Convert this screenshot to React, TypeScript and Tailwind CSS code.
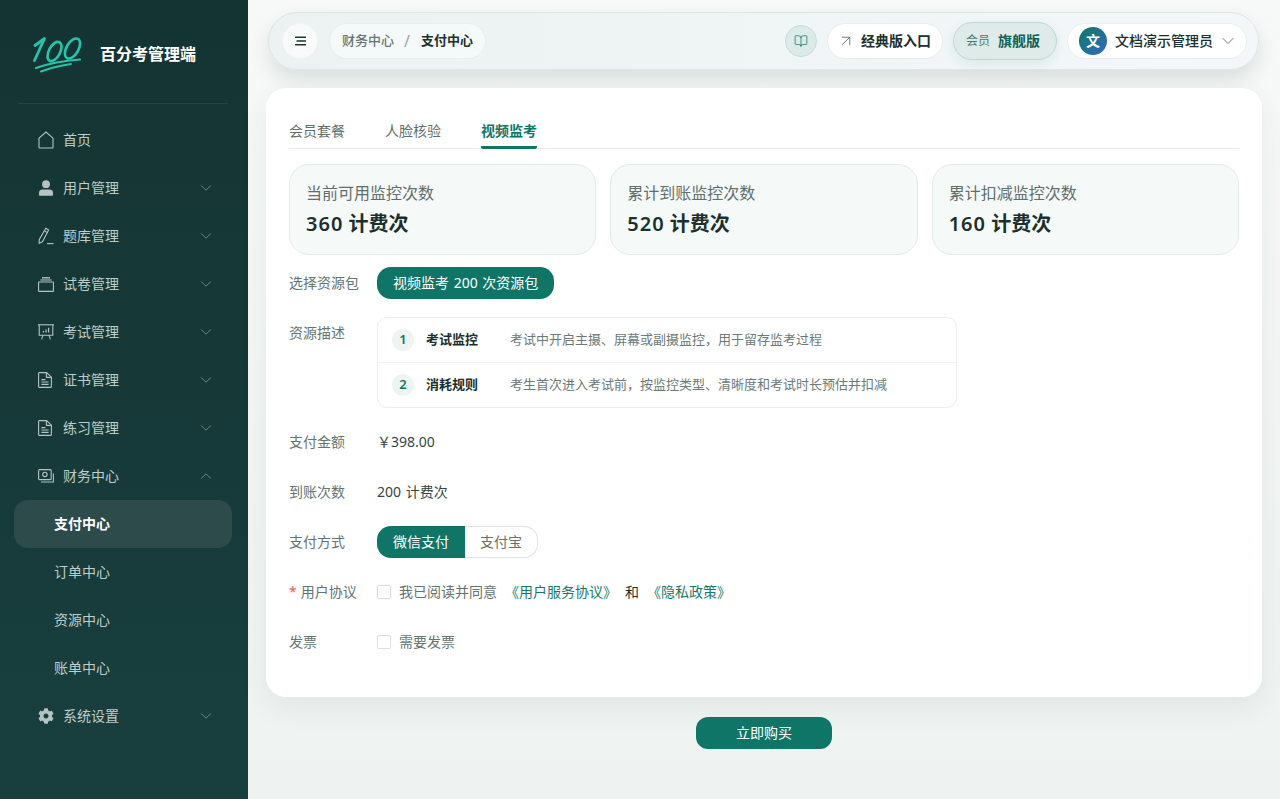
import { ArrowUpRight, BookOpen, ChevronDown, ChevronUp } from "lucide-react";
import { FaCog } from "react-icons/fa";
import type { ReactNode } from "react";

const HomeIcon = () => (
  <svg width="16" height="18" viewBox="0 0 16 18" fill="none" stroke="currentColor" strokeWidth="1.1">
    <path d="M1 7.2 8 1l7 6.2V16.4a.6.6 0 0 1-.6.6H1.6a.6.6 0 0 1-.6-.6Z" />
  </svg>
);

const UserIcon = () => (
  <svg width="16" height="16" viewBox="0 0 16 16" fill="currentColor">
    <circle cx="8" cy="4.2" r="3.9" />
    <path d="M1 12.6c0-2 1.6-3 3.4-3h7.2c1.8 0 3.4 1 3.4 3V15a.7.7 0 0 1-.7.7H1.7A.7.7 0 0 1 1 15Z" />
  </svg>
);

const PenIcon = () => (
  <svg width="16" height="18" viewBox="0 0 16 18" fill="none" stroke="currentColor" strokeWidth="1.1">
    <path d="M7.8 1.2 10.6 3 4.6 14.6 1.2 16.4 1.2 12.6Z" />
    <path d="M6.4 3.8 9.2 5.6" />
    <path d="M9 16.6h6.5" />
  </svg>
);

const PaperIcon = () => (
  <svg width="16" height="15" viewBox="0 0 16 15" fill="none" stroke="currentColor" strokeWidth="1.1">
    <rect x="0.6" y="5" width="14.8" height="9.4" rx="0.5" />
    <path d="M2.4 3h11.2" />
    <path d="M4 0.8h8" strokeWidth="1.4" />
  </svg>
);

const BoardIcon = () => (
  <svg width="16" height="16" viewBox="0 0 16 16" fill="none" stroke="currentColor" strokeWidth="1.1">
    <path d="M0 0.8h16" />
    <path d="M1.2 0.8v10.4h13.6V0.8" />
    <path d="M5 11.2 3.6 15.4M11 11.2l1.4 4.2" />
    <path d="M5.4 8.4V7M8 8.4V5.4M10.6 8.4V3.8" strokeWidth="1.3" />
  </svg>
);

const DocIcon = () => (
  <svg width="14" height="16" viewBox="0 0 14 16" fill="none" stroke="currentColor" strokeWidth="1.1">
    <path d="M0.6 1.2a.6.6 0 0 1 .6-.6h7.4l4.8 4.6v9.6a.6.6 0 0 1-.6.6H1.2a.6.6 0 0 1-.6-.6Z" />
    <path d="M8.4 0.8v4.6h4.8" />
    <path d="M3.4 7.6h4M3.4 10h7.2M3.4 12.4h7.2" />
  </svg>
);

const MoneyIcon = () => (
  <svg width="16" height="15" viewBox="0 0 16 15" fill="none" stroke="currentColor" strokeWidth="1.1">
    <rect x="0.6" y="0.6" width="12.6" height="10" rx="1" />
    <circle cx="6.9" cy="5.4" r="2.2" />
    <path d="M3 13h12.4V4.6" />
  </svg>
);

const MenuIcon = () => (
  <svg width="11" height="10" viewBox="0 0 11 10" fill="#1c3531">
    <rect x="0" y="0.5" width="11" height="1.6" rx="0.4" />
    <rect x="1.5" y="4.2" width="9.5" height="1.6" rx="0.4" />
    <rect x="0" y="7.9" width="11" height="1.6" rx="0.4" />
  </svg>
);

const Logo = () => (
  <svg width="50" height="38" viewBox="0 0 50 38" fill="none" stroke="#27c4a9" strokeLinecap="round" strokeLinejoin="round">
    <path d="M2 10.5 11.5 3.5 1.5 25.5" strokeWidth="2.8" />
    <ellipse cx="21.5" cy="16.5" rx="5.6" ry="10.5" transform="rotate(28 21.5 16.5)" strokeWidth="2.6" />
    <ellipse cx="39.5" cy="13.5" rx="6" ry="11" transform="rotate(30 39.5 13.5)" strokeWidth="2.6" />
    <path d="M3 33C17 28 32 25.5 47 24.5" strokeWidth="2.2" />
    <path d="M8 36.5C18 32.5 28 30.5 38 29" strokeWidth="2" />
  </svg>
);

const menuTop: { label: string; icon: ReactNode; arrow?: boolean }[] = [
  { label: "首页", icon: <HomeIcon /> },
  { label: "用户管理", icon: <UserIcon />, arrow: true },
  { label: "题库管理", icon: <PenIcon />, arrow: true },
  { label: "试卷管理", icon: <PaperIcon />, arrow: true },
  { label: "考试管理", icon: <BoardIcon />, arrow: true },
  { label: "证书管理", icon: <DocIcon />, arrow: true },
  { label: "练习管理", icon: <DocIcon />, arrow: true },
];

const subMenu = ["支付中心", "订单中心", "资源中心", "账单中心"];

const stats = [
  { label: "当前可用监控次数", num: "360" },
  { label: "累计到账监控次数", num: "520" },
  { label: "累计扣减监控次数", num: "160" },
];

const MenuRow = ({ label, icon, arrow, open }: { label: string; icon: ReactNode; arrow?: boolean; open?: boolean }) => (
  <div className="h-12 flex items-center pl-[38px] pr-[33px] text-[#bfcdca] text-sm">
    <span className="w-[25px] flex items-center text-[#b4c4c1]">{icon}</span>
    <span className="flex-1">{label}</span>
    {open ? (
      <ChevronUp size={18} strokeWidth={0.8} className="text-[#a9bbb8]" />
    ) : arrow ? (
      <ChevronDown size={18} strokeWidth={0.8} className="text-[#a9bbb8]" />
    ) : null}
  </div>
);

const Sidebar = () => (
  <aside className="w-[248px] shrink-0 h-full bg-gradient-to-b from-[#143433] to-[#183f3e] flex flex-col">
    <div className="h-[104px] ml-[18px] mr-5 border-b border-[#234543] flex items-center pl-[15px] pt-[4px]">
      <Logo />
      <span className="ml-[17px] text-white text-base font-bold">百分考管理端</span>
    </div>
    <nav className="mt-3">
      {menuTop.map((m) => (
        <MenuRow key={m.label} label={m.label} icon={m.icon} arrow={m.arrow} />
      ))}
      <MenuRow label="财务中心" icon={<MoneyIcon />} open />
      {subMenu.map((s, i) => (
        <div
          key={s}
          className={
            i === 0
              ? "h-12 ml-[14px] mr-4 pl-10 flex items-center rounded-[14px] bg-[#2c4b4a] text-white text-sm font-semibold"
              : "h-12 ml-[14px] mr-4 pl-10 flex items-center text-[#bfcdca] text-sm"
          }
        >
          {s}
        </div>
      ))}
      <MenuRow label="系统设置" icon={<FaCog size={16} />} arrow />
    </nav>
  </aside>
);

const Header = () => (
  <header className="mt-3 ml-5 mr-[21px] h-[58px] shrink-0 rounded-[29px] border border-[#dce6e4] bg-gradient-to-r from-[#ebf2f1] to-[#f4f7fa] shadow-[0_10px_20px_rgba(30,60,55,0.13)] flex items-center pl-[13px] pr-[11px]">
    <button className="w-9 h-9 rounded-full bg-[#f8fbfa] border border-[#f0f5f4] flex items-center justify-center">
      <MenuIcon />
    </button>
    <div className="ml-[11px] h-9 px-3 rounded-full bg-[#f5f9f9] border border-[#e6efed] flex items-center text-[13px]">
      <span className="text-[#667773] font-medium">财务中心</span>
      <span className="mx-[10px] w-[7px] text-base text-[#98a5a2]">/</span>
      <span className="text-[#1b302c] font-semibold">支付中心</span>
    </div>
    <div className="flex-1" />
    <button className="w-8 h-8 rounded-full bg-[#dcebe8] border border-[#c5dcd7] flex items-center justify-center text-[#1f7f70]">
      <BookOpen size={14} strokeWidth={1.4} />
    </button>
    <button className="ml-[10px] w-[116px] h-9 rounded-full bg-white border border-[#e6eeec] flex items-center pl-[9px] text-sm font-semibold text-[#1b302c]">
      <ArrowUpRight size={18} strokeWidth={1} className="text-[#44544f]" />
      <span className="ml-[6px]">经典版入口</span>
    </button>
    <div className="ml-[10px] w-[104px] h-[38px] rounded-full bg-[#dfebe9] border border-[#bcd8d2] shadow-[0_4px_12px_rgba(15,118,103,0.1)] flex items-center pl-3">
      <span className="text-xs text-[#3f7d71]">会员</span>
      <span className="ml-2 text-sm font-semibold text-[#125f53]">旗舰版</span>
    </div>
    <div className="ml-[10px] w-[180px] h-9 rounded-full bg-white border border-[#e9efee] flex items-center pl-[11px]">
      <span className="w-7 h-7 rounded-full bg-gradient-to-br from-[#0f7667] to-[#3368c0] text-white text-sm font-bold flex items-center justify-center">
        文
      </span>
      <span className="ml-2 text-sm font-medium text-[#1b302c] whitespace-nowrap">文档演示管理员</span>
      <ChevronDown size={20} strokeWidth={1} className="ml-[5px] text-[#51625e]" />
    </div>
  </header>
);

const FormRow = ({ label, children, required, top }: { label: string; children: ReactNode; required?: boolean; top?: boolean }) => (
  <div className={top ? "mt-[18px] flex items-start" : "mt-[18px] flex items-center min-h-8"}>
    <div className="w-[88px] shrink-0 h-8 flex items-center text-sm text-[#64746f]">
      {required && <span className="text-[#e35d5d] mr-1">*</span>}
      {label}
    </div>
    {children}
  </div>
);

const Check = () => <span className="w-[14px] h-[14px] rounded-[2px] border border-[#dcdfe6] bg-white shrink-0" />;

const descRows = [
  { no: "1", title: "考试监控", text: "考试中开启主摄、屏幕或副摄监控，用于留存监考过程" },
  { no: "2", title: "消耗规则", text: "考生首次进入考试前，按监控类型、清晰度和考试时长预估并扣减" },
];

const App = () => {
  return (
    <div className="h-screen w-full overflow-hidden flex bg-gradient-to-b from-[#f7f9f8] to-[#eef3f1] font-['Noto_Sans','Noto_Sans_CJK_SC',sans-serif]">
      <Sidebar />
      <main className="flex-1 min-w-0 flex flex-col">
        <Header />
        <section className="mt-[18px] ml-[18px] mr-[18px] h-[609px] shrink-0 rounded-[20px] bg-white shadow-[0_10px_30px_rgba(30,60,55,0.07)] px-[23px] pt-[25px]">
          <div className="h-9 border-b border-[#e9eeec] flex gap-10 text-sm">
            <span className="h-9 pt-2 text-[#5f6f6b]">会员套餐</span>
            <span className="h-9 pt-2 text-[#5f6f6b]">人脸核验</span>
            <span className="h-9 pt-2 text-[#0f7667] font-semibold border-b-[3px] border-[#0f7667] rounded-b-[2px]">视频监考</span>
          </div>

          <div className="mt-[15px] grid grid-cols-3 gap-[14px]">
            {stats.map((s) => (
              <div key={s.label} className="h-[91px] rounded-[20px] border border-[#e3ebe8] bg-[#f5f9f8] pl-4 pt-4">
                <p className="text-base leading-6 text-[#5f6f6b]">{s.label}</p>
                <p className="mt-[5px] text-xl leading-7 font-semibold text-[#1b302c]">
                  <span className="tracking-[1px]">{s.num}</span> 计费次
                </p>
              </div>
            ))}
          </div>

          <div className="mt-[12px] flex items-center">
            <div className="w-[88px] shrink-0 text-sm text-[#64746f]">选择资源包</div>
            <button className="h-8 px-4 rounded-[14px] bg-[#0f7667] text-white text-sm [word-spacing:1px]">视频监考 200 次资源包</button>
          </div>

          <FormRow label="资源描述" top>
            <div className="w-[580px] h-[91px] rounded-[10px] border border-[#ebefee] bg-white">
              {descRows.map((r, i) => (
                <div key={r.no} className={i === 0 ? "h-[45px] flex items-center pl-[14px] border-b border-[#f0f3f2]" : "h-[44px] flex items-center pl-[14px]"}>
                  <span className="w-[22px] h-[22px] rounded-full bg-[#edf4f2] text-[#0f7667] text-[13px] font-semibold flex items-center justify-center">{r.no}</span>
                  <span className="ml-3 w-[84px] text-[13px] font-semibold text-[#1b302c]">{r.title}</span>
                  <span className="text-[13px] text-[#6b7a76]">{r.text}</span>
                </div>
              ))}
            </div>
          </FormRow>

          <FormRow label="支付金额">
            <span className="text-sm text-[#33463f]">￥398.00</span>
          </FormRow>

          <FormRow label="到账次数">
            <span className="text-sm text-[#33463f] [word-spacing:1px]">200 计费次</span>
          </FormRow>

          <FormRow label="支付方式">
            <div className="flex h-8 text-sm">
              <span className="w-[88px] rounded-l-[14px] bg-[#0f7667] text-white flex items-center justify-center">微信支付</span>
              <span className="w-[73px] rounded-r-[14px] border border-l-0 border-[#dfe3ea] text-[#6a6f68] flex items-center justify-center">支付宝</span>
            </div>
          </FormRow>

          <FormRow label="用户协议" required>
            <div className="flex items-center text-sm">
              <Check />
              <span className="ml-2 text-[#64746f]">我已阅读并同意</span>
              <span className="ml-2 text-[#16796b]">《用户服务协议》</span>
              <span className="ml-2 text-[#1b302c]">和</span>
              <span className="ml-2 text-[#16796b]">《隐私政策》</span>
            </div>
          </FormRow>

          <FormRow label="发票">
            <div className="flex items-center text-sm">
              <Check />
              <span className="ml-2 text-[#64746f]">需要发票</span>
            </div>
          </FormRow>
        </section>

        <div className="mt-5 flex justify-center">
          <button className="w-[136px] h-8 rounded-[12px] bg-[#0f7667] text-white text-sm">立即购买</button>
        </div>
      </main>
    </div>
  );
};

export default App;
